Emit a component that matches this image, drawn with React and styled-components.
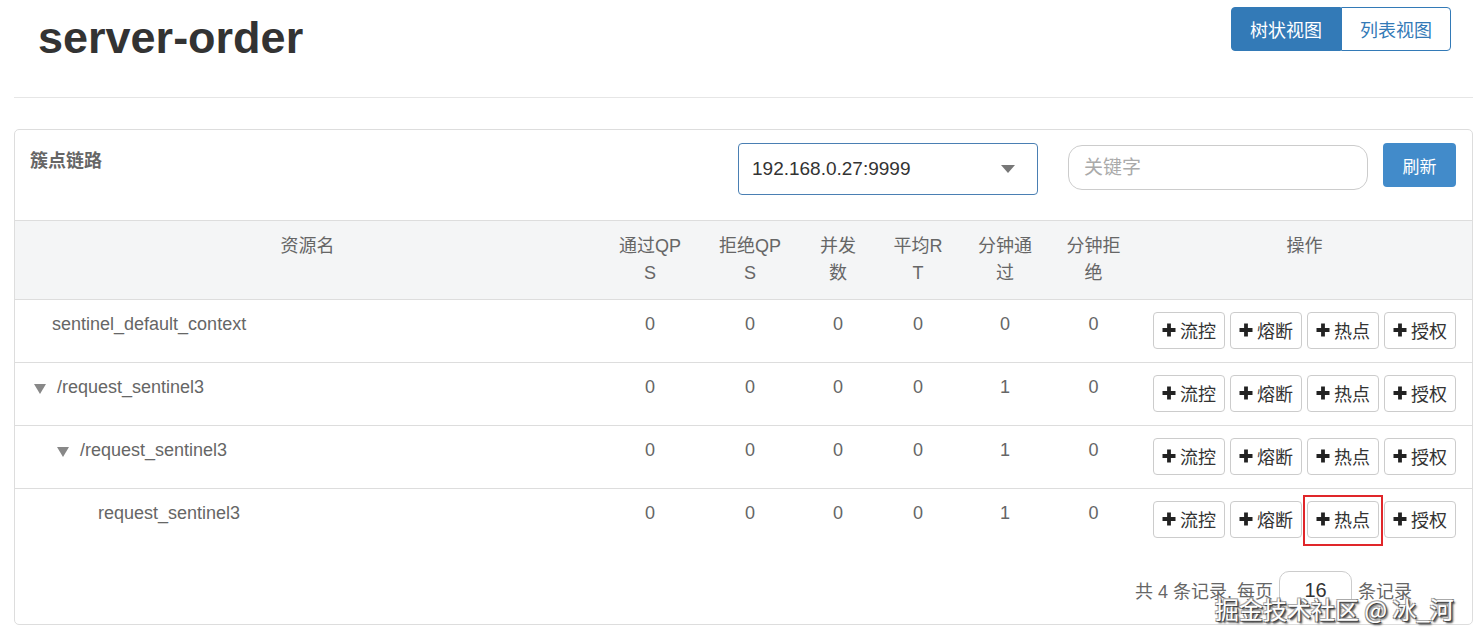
import React from 'react';
import styled, { createGlobalStyle } from 'styled-components';

const GlobalStyle = createGlobalStyle`
  html, body {
    margin: 0;
    padding: 0;
    background: #fff;
  }
  body {
    font-family: 'Liberation Sans', Arial, 'Noto Sans CJK SC', sans-serif;
    color: #333;
  }
`

const Page = styled.div`
  position: relative;
  padding: 0 10px 0 14px;
  height: 642px;
  box-sizing: border-box;
  overflow: hidden;
`

const TopBar = styled.div`
  display: flex;
  justify-content: space-between;
  align-items: flex-start;
  height: 97px;
  border-bottom: 1.5px solid #e6e6e6;
`

const Title = styled.h1`
  margin: 14px 0 0 24px;
  font-size: 45px;
  line-height: 48px;
  font-weight: 700;
  color: #333;
`

const ViewGroup = styled.div`
  display: flex;
  margin: 7px 22px 0 0;
`

const ViewButton = styled.button`
  width: 110px;
  height: 44px;
  font-family: inherit;
  font-size: 18px;
  border: 1px solid #337ab7;
  background: ${p => (p.$active ? '#337ab7' : '#fff')};
  color: ${p => (p.$active ? '#fff' : '#337ab7')};
  border-radius: ${p => (p.$active ? '4px 0 0 4px' : '0 4px 4px 0')};
  padding: 0;
`

const Panel = styled.div`
  margin-top: 31px;
  border: 1px solid #ddd;
  border-radius: 5px;
  height: 496px;
  box-sizing: border-box;
`

const PanelHeader = styled.div`
  display: flex;
  align-items: flex-start;
  height: 90px;
  padding: 13px 16px 0 15px;
  box-sizing: border-box;
`

const PanelTitle = styled.div`
  flex: 1;
  font-size: 18px;
  font-weight: 700;
  color: #666;
  padding-top: 3px;
`

const Select = styled.div`
  width: 300px;
  height: 52px;
  box-sizing: border-box;
  border: 1px solid #4a7fb3;
  border-radius: 4px;
  display: flex;
  align-items: center;
  justify-content: space-between;
  padding: 0 22px 0 13px;
  font-size: 19px;
  color: #333;
  margin-right: 30px;
`

const Caret = styled.span`
  width: 0;
  height: 0;
  border-left: 7px solid transparent;
  border-right: 7px solid transparent;
  border-top: 8px solid #777;
`

const SearchInput = styled.input`
  width: 300px;
  height: 45px;
  box-sizing: border-box;
  margin-top: 2px;
  border: 1px solid #ccc;
  border-radius: 14px;
  padding: 0 15px;
  font-family: inherit;
  font-size: 19px;
  color: #333;
  outline: none;
  margin-right: 15px;

  &::placeholder {
    color: #aaa;
  }
`

const RefreshButton = styled.button`
  width: 73px;
  height: 44px;
  border: none;
  border-radius: 4px;
  background: #428bca;
  color: #fff;
  font-family: inherit;
  font-size: 17px;
  padding: 0;
`

const Table = styled.table`
  width: 100%;
  border-collapse: collapse;
  table-layout: fixed;
`

const Th = styled.th`
  background: #f4f5f6;
  border-top: 1px solid #ddd;
  border-bottom: 1px solid #ddd;
  font-weight: 400;
  font-size: 18px;
  line-height: 27px;
  color: #666;
  padding: 12px ${p => p.$pad || 6}px;
  vertical-align: top;
  text-align: center;
  word-break: break-all;
  height: 54px;
`

const Td = styled.td`
  border-bottom: ${p => (p.$last ? 'none' : '1px solid #ddd')};
  font-size: 18px;
  line-height: 27px;
  color: #666;
  padding: 11px 0 13px;
  vertical-align: top;
  text-align: ${p => (p.$left ? 'left' : 'center')};
`

const NameCell = styled.div`
  display: flex;
  align-items: center;
  padding-left: ${p => 19 + p.$level * 23}px;
`

const Toggle = styled.span`
  width: 0;
  height: 0;
  border-left: 6.5px solid transparent;
  border-right: 6.5px solid transparent;
  border-top: 10px solid #888;
  margin: 3px 11px 0 0;
`

const Spacer = styled.span`
  width: 18px;
`

const Actions = styled.div`
  display: flex;
  justify-content: center;
  gap: 5px;
  padding-top: 1px;
`

const ActionButton = styled.button`
  width: 72px;
  height: 37px;
  box-sizing: border-box;
  border: 1px solid #ccc;
  border-radius: 4px;
  background: #fff;
  color: #333;
  font-family: inherit;
  font-size: 18px;
  display: flex;
  align-items: center;
  justify-content: center;
  gap: 4px;
  padding: 0 0 2px;
`

const Highlight = styled.span`
  position: relative;
  display: flex;

  &::after {
    content: '';
    position: absolute;
    inset: -6px -4px -8px -4px;
    border: 2px solid #e0262a;
  }
`

const Pager = styled.div`
  display: flex;
  justify-content: flex-end;
  align-items: center;
  padding: 20px 60px 0 0;
  font-size: 18px;
  color: #666;
`

const PageSize = styled.div`
  width: 73px;
  height: 38px;
  box-sizing: border-box;
  border: 1px solid #ccc;
  border-radius: 10px;
  margin: 0 6px;
  display: flex;
  align-items: center;
  justify-content: center;
  font-size: 20px;
  color: #333;
`

const Watermark = styled.div`
  position: absolute;
  left: 1215px;
  top: 591px;
  font-size: 24px;
  color: #fff;
  font-family: 'Noto Sans CJK SC', 'Liberation Sans', sans-serif;
  text-shadow: 1px 1px 0 #444, -1px -1px 0 #aaa, 1px -1px 0 #888, -1px 1px 0 #888, 2px 2px 2px #333;
  white-space: nowrap;
`

const Plus = () => (
  <svg width="14" height="14" viewBox="0 0 14 14">
    <path d="M7 0.5v13M0.5 7h13" stroke="#222" strokeWidth="3.8" />
  </svg>
)

const rows = [
  { name: 'sentinel_default_context', level: 1, parent: false, vals: [0, 0, 0, 0, 0, 0] },
  { name: '/request_sentinel3', level: 1, parent: true, vals: [0, 0, 0, 0, 1, 0] },
  { name: '/request_sentinel3', level: 2, parent: true, vals: [0, 0, 0, 0, 1, 0] },
  { name: 'request_sentinel3', level: 3, parent: false, vals: [0, 0, 0, 0, 1, 0] },
]

const actions = ['流控', '熔断', '热点', '授权']

const App = () => {
  return (
    <Page>
      <GlobalStyle />
      <TopBar>
        <Title>server-order</Title>
        <ViewGroup>
          <ViewButton $active>树状视图</ViewButton>
          <ViewButton>列表视图</ViewButton>
        </ViewGroup>
      </TopBar>
      <Panel>
        <PanelHeader>
          <PanelTitle>簇点链路</PanelTitle>
          <Select>
            192.168.0.27:9999
            <Caret />
          </Select>
          <SearchInput placeholder="关键字" />
          <RefreshButton>刷新</RefreshButton>
        </PanelHeader>
        <Table>
          <colgroup>
            <col style={{ width: 585 }} />
            <col style={{ width: 100 }} />
            <col style={{ width: 100 }} />
            <col style={{ width: 76 }} />
            <col style={{ width: 84 }} />
            <col style={{ width: 90 }} />
            <col style={{ width: 87 }} />
            <col />
          </colgroup>
          <thead>
            <tr>
              <Th>资源名</Th>
              <Th $pad={15}>通过QPS</Th>
              <Th $pad={15}>拒绝QPS</Th>
              <Th $pad={12}>并发数</Th>
              <Th $pad={15}>平均RT</Th>
              <Th $pad={12}>分钟通过</Th>
              <Th $pad={12}>分钟拒绝</Th>
              <Th>操作</Th>
            </tr>
          </thead>
          <tbody>
            {rows.map((r, i) => {
              const last = i === rows.length - 1;
              return (
                <tr key={i}>
                  <Td $left $last={last}>
                    <NameCell $level={r.level - 1}>
                      {r.parent ? <Toggle /> : <Spacer />}
                      {r.name}
                    </NameCell>
                  </Td>
                  {r.vals.map((v, j) => (
                    <Td key={j} $last={last}>{v}</Td>
                  ))}
                  <Td $last={last}>
                    <Actions>
                      {actions.map(a => {
                        const btn = (
                          <ActionButton key={a}>
                            <Plus />
                            {a}
                          </ActionButton>
                        );
                        return last && a === '热点' ? <Highlight key={a}>{btn}</Highlight> : btn;
                      })}
                    </Actions>
                  </Td>
                </tr>
              );
            })}
          </tbody>
        </Table>
        <Pager>
          共 4 条记录, 每页
          <PageSize>16</PageSize>
          条记录
        </Pager>
      </Panel>
      <Watermark>掘金技术社区 @ 冰_河</Watermark>
    </Page>
  );
}

export default App
